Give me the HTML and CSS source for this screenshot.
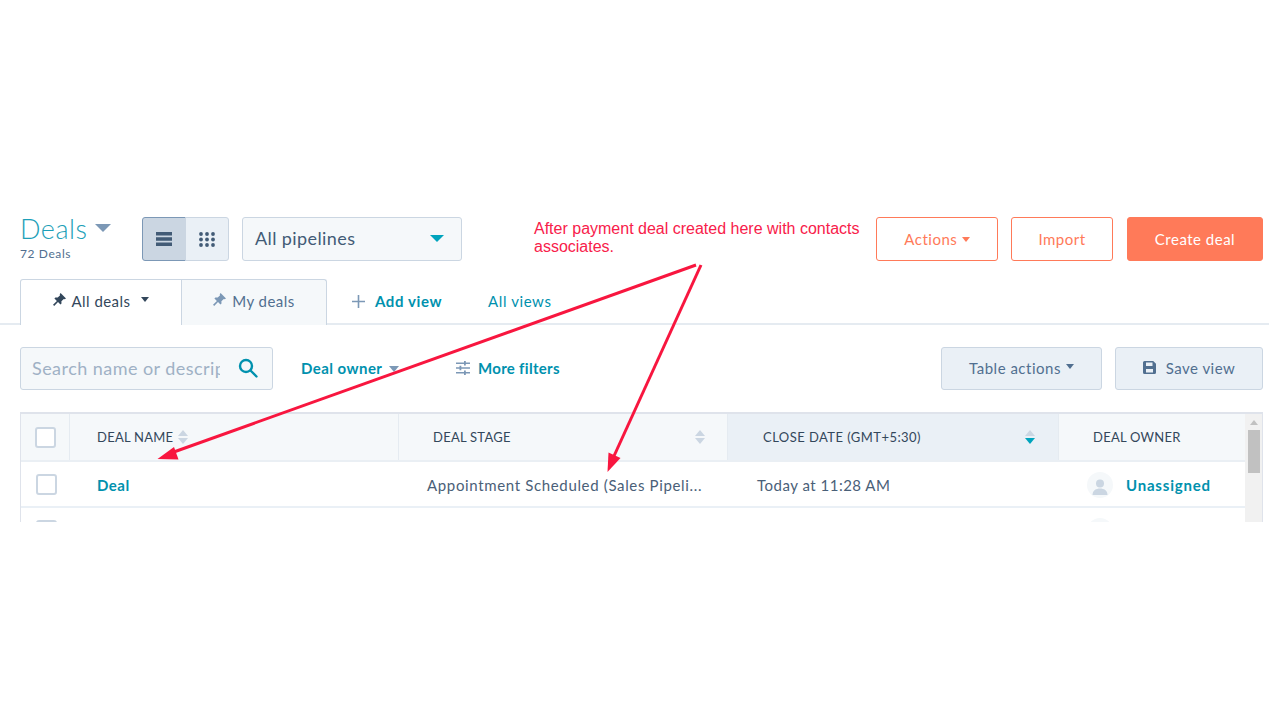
FILE: index.html
```html
<!DOCTYPE html>
<html lang="en">
<head>
  <meta charset="UTF-8" /><meta name="viewport" content="width=device-width,initial-scale=1">
  <title>Deals</title>
  <link rel="stylesheet" href="styles.css">
</head>
<body>
  <div class="page">
    <header class="top">
      <div class="title">
        <h1>Deals <span class="caret caret-title"></span></h1>
        <p>72 Deals</p>
      </div>
      <div class="toggle">
        <span class="toggle-btn on">
          <svg width="16" height="14" viewBox="0 0 16 14"><path d="M0 0h16v3.4H0zM0 5.3h16v3.4H0zM0 10.6h16V14H0z" fill="#425b76"/></svg>
        </span>
        <span class="toggle-btn">
          <svg width="16" height="15" viewBox="0 0 16 15" fill="#425b76"><circle cx="2" cy="2" r="1.9"/><circle cx="8" cy="2" r="1.9"/><circle cx="14" cy="2" r="1.9"/><circle cx="2" cy="7.5" r="1.9"/><circle cx="8" cy="7.5" r="1.9"/><circle cx="14" cy="7.5" r="1.9"/><circle cx="2" cy="13" r="1.9"/><circle cx="8" cy="13" r="1.9"/><circle cx="14" cy="13" r="1.9"/></svg>
        </span>
      </div>
      <div class="pipeline">All pipelines <span class="caret caret-teal"></span></div>
      <p class="note">After payment deal created here with contacts associates.</p>
      <div class="actions">
        <button class="btn btn-line btn-actions">Actions <span class="caret caret-sm"></span></button>
        <button class="btn btn-line btn-import">Import</button>
        <button class="btn btn-fill">Create deal</button>
      </div>
    </header>

    <nav class="tabs">
      <span class="tab active">
        <svg class="pin" width="13" height="13" viewBox="0 0 13 13"><path d="M7.6 0 13 5.4l-1.3.9-.9-.4-2.4 2.4.1 2.3-1 1L5 9.100 1.200 13 0 11.800 3.900 8 1.400 5.500l1-1 2.300.1 2.400-2.400-.4-.9z" fill="#33475b"/></svg>
        All deals <span class="caret caret-dark"></span>
      </span>
      <span class="tab">
        <svg class="pin" width="13" height="13" viewBox="0 0 13 13"><path d="M7.600 0 13 5.400l-1.300.9-.9-.4-2.400 2.400.1 2.300-1 1L5 9.100 1.200 13 0 11.800 3.900 8 1.400 5.500l1-1 2.300.1 2.400-2.400-.4-.9z" fill="#7c98b6"/></svg>
        My deals
      </span>
      <a class="tab-link add-view">
        <svg width="13" height="13" viewBox="0 0 13 13"><path d="M5.700 0h1.600v5.700H13v1.600H7.300V13H5.700V7.300H0V5.700h5.700z" fill="#7c98b6"/></svg>
        Add view
      </a>
      <a class="tab-link all-views">All views</a>
    </nav>

    <section class="filters">
      <div class="search">
        <span class="search-text">Search name or descrip</span>
        <svg width="20" height="20" viewBox="0 0 20 20" fill="none" stroke="#0091ae" stroke-width="2.400"><circle cx="8" cy="8" r="6"/><path d="m12.500 12.500 6 6" stroke-linecap="round"/></svg>
      </div>
      <a class="filter-link owner">Deal owner <span class="caret caret-grey"></span></a>
      <a class="filter-link more">
        <svg width="14" height="14" viewBox="0 0 14 14" fill="#7c98b6"><path d="M0 1.500h14v1.400H0zM0 6.300h14v1.400H0zM0 11.100h14v1.400H0z"/><path d="M8 0h1.800v4.400H8zM3.500 4.800h1.800v4.400H3.500zM8 9.600h1.800V14H8z"/></svg>
        More filters
      </a>
      <div class="filter-btns">
        <button class="btn btn-soft btn-table"><span>Table actions</span> <span class="caret caret-slate"></span></button>
        <button class="btn btn-soft btn-save">
          <svg width="13" height="13" viewBox="0 0 13 13"><path d="M0 1.500A1.500 1.500 0 0 1 1.500 0h8.700L13 2.800v8.700a1.500 1.500 0 0 1-1.500 1.500h-10A1.500 1.500 0 0 1 0 11.500zM3 1.600V5h6.500V1.600zM3 8v3.400h7V8z" fill="#516f90" fill-rule="evenodd"/></svg>
          <span>Save view</span>
        </button>
      </div>
    </section>

    <section class="table">
      <div class="row head">
        <div class="cell check"><span class="box"></span></div>
        <div class="cell name">DEAL NAME <span class="sort"><i class="up"></i><i class="down"></i></span></div>
        <div class="cell stage">DEAL STAGE <span class="sort push"><i class="up"></i><i class="down"></i></span></div>
        <div class="cell date">CLOSE DATE (GMT+5:30) <span class="sort push"><i class="up"></i><i class="down teal"></i></span></div>
        <div class="cell owner-col">DEAL OWNER</div>
      </div>
      <div class="row">
        <div class="cell check"><span class="box"></span></div>
        <div class="cell name"><a class="deal-link">Deal</a></div>
        <div class="cell stage">Appointment Scheduled (Sales Pipeli...</div>
        <div class="cell date">Today at 11:28 AM</div>
        <div class="cell owner-col">
          <span class="avatar"><svg width="26" height="26" viewBox="0 0 26 26"><circle cx="13" cy="11.500" r="4" fill="#cbd6e2"/><path d="M5.500 23c0-4.500 3.500-6.500 7.500-6.500s7.500 2 7.500 6.500z" fill="#cbd6e2"/></svg></span>
          <a class="deal-link owner-link">Unassigned</a>
        </div>
      </div>
      <div class="row">
        <div class="cell check"><span class="box"></span></div>
        <div class="cell name"></div>
        <div class="cell stage"></div>
        <div class="cell date"></div>
        <div class="cell owner-col"><span class="avatar"></span></div>
      </div>
      <div class="scrollbar"><span class="arrow"></span><span class="thumb"></span></div>
    </section>
  </div>

  <svg class="arrows" width="1269" height="713" viewBox="0 0 1269 713">
    <path d="M696 265 171 453" stroke="#f8163f" stroke-width="3" fill="none"/>
    <path d="m157.500 459 16.500-12 4.500 12.500z" fill="#f8163f"/>
    <path d="M701 265 614 456" stroke="#f8163f" stroke-width="3" fill="none"/>
    <path d="m607.500 472 1-19.500 12 5.500z" fill="#f8163f"/>
  </svg>
</body>
</html>
```

FILE: styles.css
```css
* { box-sizing: border-box; }
html, body { height: 100%; }
body {
  margin: 0;
  font-family: Lato, 'Open Sans', sans-serif;
  color: #33475b;
  background: #fff;
  position: relative;
  overflow: hidden;
}
.page { padding-top: 217px; }

/* carets */
.caret {
  display: inline-block; width: 0; height: 0;
  border-style: solid; border-color: #516f90 transparent transparent;
  border-width: 5px 4.500px 0;
  vertical-align: middle;
}
.caret-title { border-width: 8px 8px 0; border-top-color: #7c98b6; margin: 0 0 8px 0; }
.caret-teal { border-width: 7px 7.500px 0; border-top-color: #00a4bd; }
.caret-sm { border-top-color: #ff7a59; margin: 0 0 3px 0; }
.caret-dark { border-top-color: #33475b; margin: 0 0 2px 5px; }
.caret-grey { border-width: 6px 5.500px 0; border-top-color: #7c98b6; margin: 0 0 2px 3px; }
.caret-slate { border-top-color: #516f90; margin: 0 0 3px 1px; }

/* top bar */
.top { display: flex; align-items: flex-start; padding: 0 6px 0 20px; height: 44px; }
.title { width: 122px; }
.title h1 {
  margin: 0; font-size: 27px; font-weight: 300; line-height: 24px;
  color: #1d9fb8; letter-spacing: .5px; white-space: nowrap;
}
.title p { margin: 6px 0 0; font-size: 12px; line-height: 14px; color: #516f90; letter-spacing: .6px; }
.toggle { display: flex; width: 87px; height: 44px; }
.toggle-btn {
  flex: 1; display: flex; align-items: center; justify-content: center;
  background: #eaf0f6; border: 1px solid #cbd6e2; margin-left: -1px;
  border-radius: 0 3px 3px 0;
}
.toggle-btn.on {
  flex: 0 0 44px; margin-left: 0; background: #cbd6e2; border-color: #7c98b6;
  border-radius: 3px 0 0 3px;
}
.pipeline {
  width: 220px; height: 44px; margin-left: 13px; padding: 0 17px 2px 12px;
  display: flex; align-items: center; justify-content: space-between;
  background: #f5f8fa; border: 1px solid #cbd6e2; border-radius: 3px;
  font-size: 18px; letter-spacing: .4px; color: #425b76;
}
.note {
  width: 340px; margin: 3px 0 0 72px;
  font-family: 'Liberation Sans', Arial, sans-serif;
  font-size: 16px; line-height: 18px; color: #f8204a;
}
.actions { display: flex; gap: 13px; margin-left: auto; }
.btn {
  height: 44px; border-radius: 3px; font-family: inherit; font-size: 15px;
  letter-spacing: .5px; padding: 0; cursor: pointer;
}
.btn-line { background: #fff; border: 1px solid #ff7a59; color: #ff7a59; }
.btn-actions { width: 122px; }
.btn-import { width: 102px; }
.btn-fill { width: 136px; margin-left: 1px; background: #ff7a59; border: 1px solid #ff7a59; color: #fff; }
.btn-soft {
  height: 43px; padding-bottom: 2px;
  display: flex; align-items: center; justify-content: center; gap: 4px;
  background: #eaf0f6; border: 1px solid #cbd6e2; color: #516f90;
}
.btn-table { width: 161px; }
.btn-save { width: 148px; gap: 10px; }

/* tabs */
.tabs {
  display: flex; align-items: stretch; height: 46px; margin-top: 18px;
  padding-left: 20px; border-bottom: 2px solid #e5ebf1;
}
.tab {
  display: flex; align-items: center; justify-content: center; gap: 6px;
  height: 46px; padding-bottom: 4px; font-size: 15px; letter-spacing: .45px;
  border: 1px solid #cbd6e2; border-bottom: 0; background: #f5f8fa; color: #516f90;
  width: 146px; border-radius: 0 3px 0 0; margin-left: -1px;
}
.tab.active { width: 162px; margin-left: 0; background: #fff; color: #33475b; border-radius: 3px 0 0 0; }
.pin { margin-bottom: 3px; }
.tab-link {
  display: flex; align-items: center; gap: 10px;
  font-size: 15px; font-weight: 700; letter-spacing: .6px; color: #0091ae;
}
.add-view { margin-left: 25px; }
.all-views { margin-left: 46px; font-weight: 400; letter-spacing: .6px; }

/* filters */
.filters { display: flex; align-items: center; height: 43px; margin-top: 22px; padding: 0 6px 0 20px; }
.search {
  width: 253px; height: 43px; padding: 0 14px 2px 11px;
  display: flex; align-items: center; justify-content: space-between;
  background: #f5f8fa; border: 1px solid #cbd6e2; border-radius: 3px;
}
.search-text {
  width: 188px; overflow: hidden; white-space: nowrap;
  font-size: 18px; letter-spacing: .45px; color: #9fb1c5;
}
.filter-link {
  padding-bottom: 2px; font-size: 15px; font-weight: 700; letter-spacing: .45px;
  color: #0091ae; white-space: nowrap;
}
.owner { margin-left: 28px; width: 155px; }
.more { display: flex; align-items: center; gap: 8px; letter-spacing: .3px; }
.filter-btns { display: flex; gap: 13px; margin-left: auto; }

/* table */
.table {
  position: relative; height: 110px; margin: 22px 6px 0 20px; overflow: hidden;
  border: 1px solid #dfe3eb; border-bottom: 0; border-top-width: 2px;
  padding-right: 17px;
}
.row {
  display: grid; grid-template-columns: 49px 329px 329px 331px 1fr;
  height: 46px; padding-top: 1px; border-bottom: 2px solid #eaf0f6;
  font-size: 15px; letter-spacing: .65px; color: #4a6078;
}
.row.head {
  height: 48px; padding-top: 0; background: #f5f8fa; border-bottom: 2px solid #eaeff4;
  font-size: 13px; letter-spacing: .25px; color: #33475b;
}
.cell { display: flex; align-items: center; padding-left: 27px; white-space: nowrap; }
.check { padding-left: 15px; }
.head .check { padding-left: 14px; }
.stage { padding-left: 28px; }
.date { padding-left: 29px; letter-spacing: .5px; }
.owner-col { padding-left: 28px; gap: 13px; }
.head .cell { border-right: 1px solid #e5ebf1; }
.head .cell:last-child { border-right: 0; }
.head .stage { padding-left: 34px; padding-right: 22px; }
.head .date { padding-left: 35px; padding-right: 23px; background: #eaf0f6; letter-spacing: .45px; }
.head .owner-col { padding-left: 34px; }
.box {
  display: block; width: 21px; height: 21px; background: #fff;
  border: 2px solid #cbd6e2; border-radius: 3px;
}
.sort { display: inline-flex; flex-direction: column; gap: 2px; margin-left: 5px; }
.sort.push { margin-left: auto; }
.sort i {
  display: block; width: 0; height: 0;
  border-style: solid; border-color: transparent; border-width: 0 5px 6px;
}
.sort .up { border-bottom-color: #cbd6e2; }
.sort .down { border-width: 6px 5px 0; border-top-color: #cbd6e2; }
.sort .down.teal { border-top-color: #00a4bd; }
.deal-link { font-weight: 700; color: #0091ae; letter-spacing: .5px; }
.owner-link { letter-spacing: .8px; }
.avatar {
  display: block; flex: none; width: 26px; height: 26px; border-radius: 50%;
  background: #f5f8fa; overflow: hidden;
}
.avatar svg { display: block; }
.scrollbar {
  position: absolute; top: 0; right: 0; bottom: 0; width: 17px;
  background: #f1f1f1; display: flex; flex-direction: column; align-items: center;
}
.arrow {
  width: 0; height: 0; margin: 6px 0 5px;
  border-style: solid; border-color: transparent transparent #c1c1c1; border-width: 0 4px 5px;
}
.thumb { width: 12px; height: 43px; background: #c1c1c1; }

.arrows { position: absolute; top: 0; left: 0; pointer-events: none; }
```
